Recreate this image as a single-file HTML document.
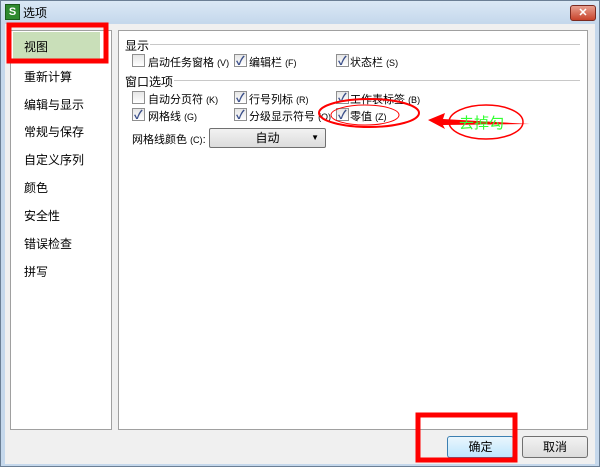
<!DOCTYPE html>
<html><head><meta charset="utf-8"><style>
body{margin:0;width:600px;height:467px;overflow:hidden;font-family:"Liberation Sans","Noto Sans CJK SC",sans-serif;font-size:12px;color:#000;}
.win{position:absolute;left:0;top:0;width:598px;height:465px;border:1px solid #6b7f95;background:linear-gradient(#dbe8f5,#c5d8ec 22px,#c5d8ec);}
.body{position:absolute;left:4px;top:23px;width:590px;height:440px;background:#f0f0f0;}
.t{position:absolute;white-space:nowrap;}
.r .t{font-size:11px;}
small{font-size:9px;}
.cb{position:absolute;width:11px;height:11px;border:1px solid #8f8f8f;background:linear-gradient(#e6e6e6,#fff);}
.cb.c::after{content:"✓";position:absolute;left:1px;top:-3px;font-size:12px;color:#3b4f8a;font-weight:bold;}
.btn{position:absolute;height:20px;border:1px solid #707070;border-radius:3px;background:linear-gradient(#f2f2f2,#dcdcdc);text-align:center;line-height:20px;}
</style></head><body>
<div class="win">
<div style="position:absolute;left:4px;top:3px;width:13px;height:14px;background:#2f8a2f;border:1px solid #1c5c1c;color:#fff;font-size:11px;font-weight:bold;text-align:center;line-height:14px">S</div>
<div class="t" style="left:22px;top:3px;font-size:12px">选项</div>
<div style="position:absolute;left:569px;top:4px;width:24px;height:14px;border:1px solid #7a2a20;border-radius:3px;background:linear-gradient(#e8a090,#c8432b);color:#fff;font-size:11px;text-align:center;line-height:14px;font-weight:bold">✕</div>
<div class="body"></div>
</div>
<div style="position:absolute;left:10px;top:30px;width:100px;height:398px;background:#fff;border:1px solid #a0a0a0"></div>
<div style="position:absolute;left:13px;top:32px;width:87px;height:27px;background:#c9dfb9"></div>
<div class="t" style="left:24px;top:38px">视图</div>
<div class="t" style="left:24px;top:68px">重新计算</div>
<div class="t" style="left:24px;top:96px">编辑与显示</div>
<div class="t" style="left:24px;top:123px">常规与保存</div>
<div class="t" style="left:24px;top:151px">自定义序列</div>
<div class="t" style="left:24px;top:179px">颜色</div>
<div class="t" style="left:24px;top:207px">安全性</div>
<div class="t" style="left:24px;top:235px">错误检查</div>
<div class="t" style="left:24px;top:263px">拼写</div>
<div style="position:absolute;left:118px;top:30px;width:468px;height:398px;background:#fff;border:1px solid #a0a0a0"></div>
<div class="r">
<div class="t" style="left:125px;top:37px;font-size:12px">显示</div>
<div style="position:absolute;left:150px;top:44px;width:430px;border-top:1px solid #c8c8c8"></div>
<div class="cb" style="left:132px;top:54px"></div><div class="t" style="left:148px;top:54px">启动任务窗格 <small>(V)</small></div>
<div class="cb c" style="left:234px;top:54px"></div><div class="t" style="left:249px;top:54px">编辑栏 <small>(F)</small></div>
<div class="cb c" style="left:336px;top:54px"></div><div class="t" style="left:350px;top:54px">状态栏 <small>(S)</small></div>
<div class="t" style="left:125px;top:73px;font-size:12px">窗口选项</div>
<div style="position:absolute;left:174px;top:80px;width:406px;border-top:1px solid #c8c8c8"></div>
<div class="cb" style="left:132px;top:91px"></div><div class="t" style="left:148px;top:91px">自动分页符 <small>(K)</small></div>
<div class="cb c" style="left:234px;top:91px"></div><div class="t" style="left:249px;top:91px">行号列标 <small>(R)</small></div>
<div class="cb c" style="left:336px;top:91px"></div><div class="t" style="left:350px;top:91px">工作表标签 <small>(B)</small></div>
<div class="cb c" style="left:132px;top:108px"></div><div class="t" style="left:148px;top:108px">网格线 <small>(G)</small></div>
<div class="cb c" style="left:234px;top:108px"></div><div class="t" style="left:249px;top:108px">分级显示符号 <small>(O)</small></div>
<div class="cb c" style="left:336px;top:108px"></div><div class="t" style="left:350px;top:108px">零值 <small>(Z)</small></div>
<div class="t" style="left:132px;top:131px">网格线颜色 <small>(C)</small>:</div>
</div>
<div class="btn" style="left:209px;top:128px;width:115px;height:18px;line-height:18px;border-radius:2px">自动<span style="position:absolute;right:6px;font-size:8px">▼</span></div>
<div class="btn" style="left:447px;top:436px;width:65px;border-color:#3c7fb1;background:linear-gradient(#eaf6fd,#bee6fd)">确定</div>
<div class="btn" style="left:522px;top:436px;width:64px">取消</div>
<svg width="600" height="467" style="position:absolute;left:0;top:0">
<rect x="9" y="25" width="97" height="36" fill="none" stroke="#f00" stroke-width="5"/>
<rect x="418" y="415" width="97" height="45" fill="none" stroke="#f00" stroke-width="5"/>
<ellipse cx="369" cy="113" rx="50" ry="14" fill="none" stroke="#f00" stroke-width="2"/>
<ellipse cx="365" cy="115" rx="34" ry="10" fill="none" stroke="#f00" stroke-width="1"/>
<ellipse cx="486" cy="122" rx="37" ry="17" fill="none" stroke="#f00" stroke-width="1.5"/>
<path d="M428 120 L445 113 L443 119 L530 124 L443 125 L445 129 Z" fill="#f00"/>
<text x="459" y="128" font-size="15" fill="#3f3" font-family="Noto Sans CJK SC,sans-serif">去掉勾</text>
</svg>
</body></html>
